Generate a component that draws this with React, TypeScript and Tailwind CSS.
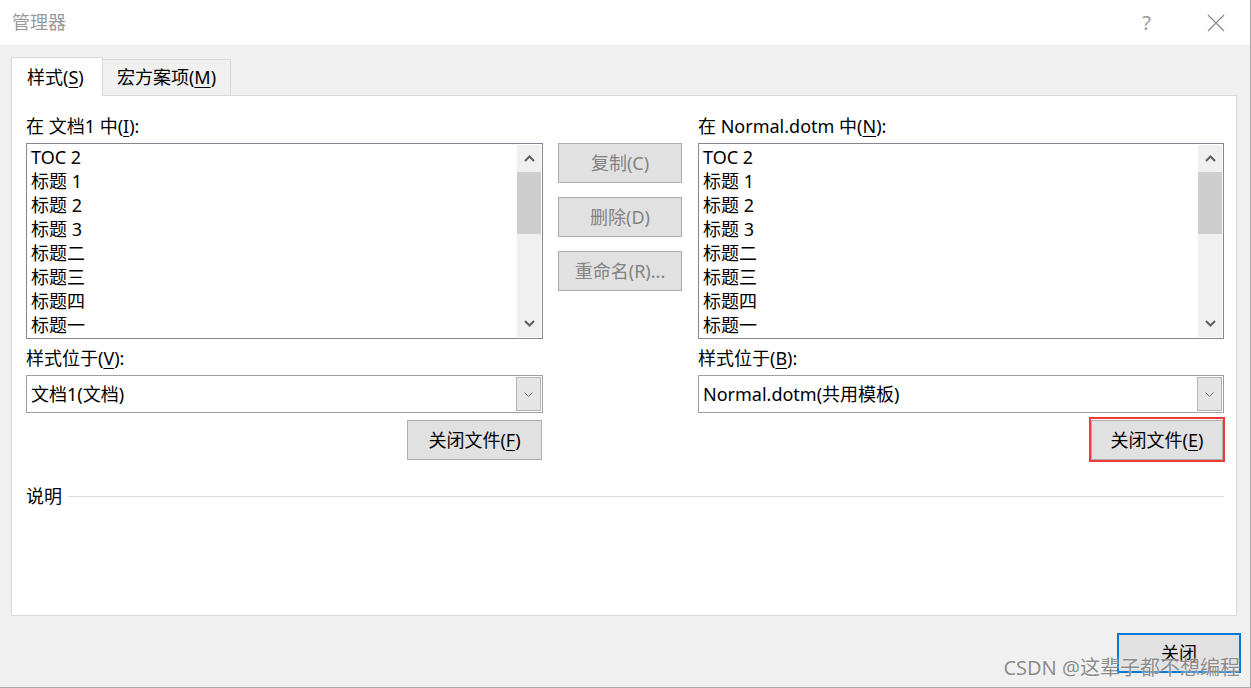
import type { ReactNode } from "react";

const FONT = { fontFamily: '"Noto Sans", "Noto Sans CJK SC", sans-serif' };

const styles = ["TOC 2", "标题 1", "标题 2", "标题 3", "标题二", "标题三", "标题四", "标题一"];

function U({ children }: { children: ReactNode }) {
  return <span className="underline underline-offset-[3px] decoration-1">{children}</span>;
}

function Chevron({ dir }: { dir: "up" | "down" }) {
  return (
    <svg width="11" height="7" viewBox="0 0 11 7" className="block">
      <polyline
        points={dir === "up" ? "1,6 5.5,1.5 10,6" : "1,1 5.5,5.5 10,1"}
        fill="none"
        stroke="#606060"
        strokeWidth="2"
      />
    </svg>
  );
}

function StyleList() {
  return (
    <div className="mt-[5px] flex h-[196px] border border-[#828790] bg-white">
      <div className="flex-1 pl-[4px] pt-px">
        {styles.map((s) => (
          <div key={s} className="h-[24px] leading-[24px]">
            {s}
          </div>
        ))}
      </div>
      <div className="my-px mr-px flex w-[24px] flex-col bg-[#f0f0f0]">
        <div className="flex h-[27px] items-center justify-center">
          <Chevron dir="up" />
        </div>
        <div className="h-[62px] bg-[#cdcdcd]" />
        <div className="flex-1" />
        <div className="flex h-[27px] items-center justify-center">
          <Chevron dir="down" />
        </div>
      </div>
    </div>
  );
}

function Combo({ value }: { value: string }) {
  return (
    <div className="mt-[5px] flex h-[38px] items-center border border-[#a0a0a0] bg-white">
      <div className="flex-1 pl-[4px]">{value}</div>
      <div className="mr-px flex h-[34px] w-[25px] items-center justify-center border border-[#b4b4b4] bg-[#e6e6e6]">
        <svg width="9" height="5" viewBox="0 0 9 5">
          <polyline points="0.5,0.5 4.5,4.5 8.5,0.5" fill="none" stroke="#707070" strokeWidth="1" />
        </svg>
      </div>
    </div>
  );
}

function Btn({ children, disabled, className = "" }: { children: ReactNode; disabled?: boolean; className?: string }) {
  return (
    <div
      className={`flex h-[40px] items-center justify-center border border-[#adadad] bg-[#e1e1e1] ${
        disabled ? "text-[#838383]" : "text-black"
      } ${className}`}
    >
      {children}
    </div>
  );
}

export default function App() {
  return (
    <div
      style={FONT}
      className="relative flex h-[688px] w-[1251px] flex-col overflow-hidden border-r border-b border-[#a8a8a8] bg-[#f0f0f0] text-[18px] text-black"
    >
      {/* title bar */}
      <div className="flex h-[45px] shrink-0 items-center bg-white pl-[12px]">
        <span className="text-[#999999]">管理器</span>
        <span className="ml-auto mr-[56px] text-[20px] text-[#999999]">?</span>
        <svg width="18" height="18" viewBox="0 0 18 18" className="mr-[25px]">
          <path d="M1 1 L17 17 M17 1 L1 17" stroke="#8a8a8a" strokeWidth="1.2" />
        </svg>
      </div>

      <div className="flex flex-1 flex-col pl-[11px] pr-[13px] pt-[12px]">
        {/* tabs */}
        <div className="flex h-[38px] items-end">
          <div className="relative z-10 -mb-px flex h-[39px] w-[92px] items-center border border-b-0 border-[#d9d9d9] bg-white pl-[15px]">
            样式(<U>S</U>)
          </div>
          <div className="flex h-[36px] w-[128px] items-center justify-center border border-b-0 border-l-0 border-[#d9d9d9] bg-[#f0f0f0]">
            宏方案项(<U>M</U>)
          </div>
        </div>

        {/* panel */}
        <div className="flex h-[521px] flex-col border border-[#d9d9d9] bg-white pl-[14px] pr-[12px] pt-[18px]">
          <div className="flex items-start">
            <div className="flex w-[517px] flex-col">
              <div className="h-[24px] leading-[24px]">
                在 文档1 中(<U>I</U>):
              </div>
              <StyleList />
              <div className="mt-[7px] h-[24px] leading-[24px]">
                样式位于(<U>V</U>):
              </div>
              <Combo value="文档1(文档)" />
              <Btn className="mt-[7px] mr-px w-[135px] self-end">
                关闭文件(<U>F</U>)
              </Btn>
            </div>

            <div className="ml-[15px] flex w-[124px] flex-col gap-[14px] pt-[29px]">
              <Btn disabled>复制(C)</Btn>
              <Btn disabled>删除(D)</Btn>
              <Btn disabled>重命名(R)...</Btn>
            </div>

            <div className="ml-[16px] flex w-[526px] flex-col">
              <div className="h-[24px] leading-[24px]">
                在 Normal.dotm 中(<U>N</U>):
              </div>
              <StyleList />
              <div className="mt-[7px] h-[24px] leading-[24px]">
                样式位于(<U>B</U>):
              </div>
              <Combo value="Normal.dotm(共用模板)" />
              <div className="-mr-px mt-[4px] w-[136px] self-end border-2 border-[#f03a3a] pt-px">
                <Btn>
                  关闭文件(<U>E</U>)
                </Btn>
              </div>
            </div>
          </div>

          <div className="mt-[22px] flex h-[24px] items-center">
            <span className="leading-[24px]">说明</span>
            <div className="ml-[6px] h-px flex-1 bg-[#dcdcdc]" />
          </div>
        </div>

        {/* footer */}
        <div className="mt-[17px] flex justify-end">
          <div className="-mr-[4px] flex h-[40px] w-[124px] items-center justify-center border-2 border-[#0078d7] bg-[#e1e1e1]">
            关闭
          </div>
        </div>
      </div>

      {/* watermark */}
      <div className="pointer-events-none absolute bottom-[8px] right-[10px] text-[20px] leading-[22px] text-[#8c8c8c] [text-shadow:0_0_2px_#ffffff]">
        CSDN @这辈子都不想编程
      </div>
    </div>
  );
}
